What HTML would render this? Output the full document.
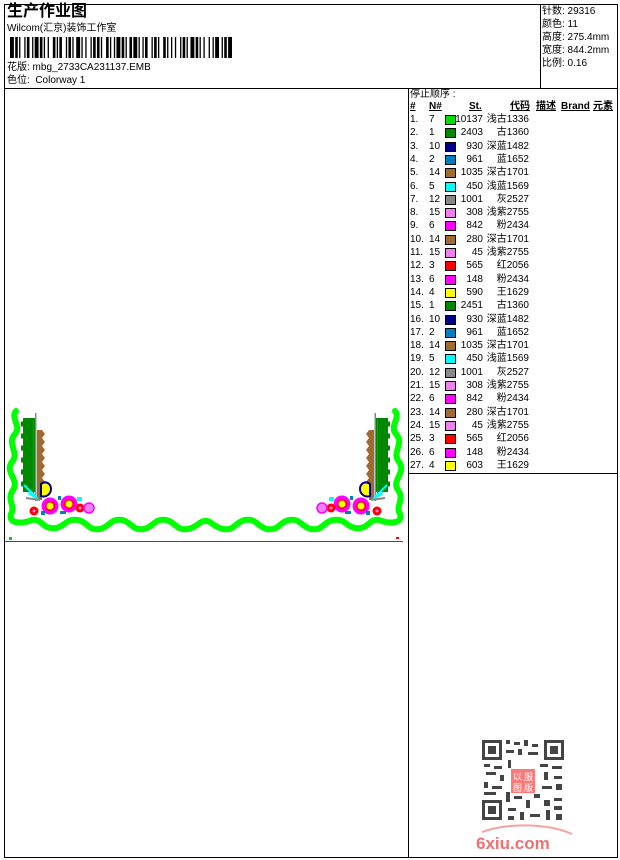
<!DOCTYPE html>
<html><head><meta charset="utf-8"><style>
*{margin:0;padding:0;box-sizing:border-box}
body{width:620px;height:860px;background:#fff;position:relative;font-family:"Liberation Sans","Noto Sans CJK SC",sans-serif;font-size:10px;color:#000;overflow:hidden}
.abs{position:absolute}
.l{position:absolute;background:#000}
.t{position:absolute;white-space:nowrap;line-height:12px}
.r{position:absolute;left:410px;height:13px;width:200px;font-size:10px;line-height:12px}
.r span{position:absolute;top:0}
.sw{position:absolute;top:1px;left:35px;width:11px;height:10px;border:1px solid #000}
</style></head><body>
<div class="l" style="left:4px;top:4px;width:614px;height:1px"></div>
<div class="l" style="left:4px;top:857px;width:614px;height:1px"></div>
<div class="l" style="left:4px;top:4px;width:1px;height:854px"></div>
<div class="l" style="left:617px;top:4px;width:1px;height:854px"></div>
<div class="l" style="left:4px;top:88px;width:614px;height:1px"></div>
<div class="l" style="left:540px;top:4px;width:1px;height:84px"></div>
<div class="l" style="left:408px;top:88px;width:1px;height:770px"></div>
<div class="l" style="left:408px;top:473px;width:210px;height:1px"></div>

<div class="t" style="left:7px;top:3px;font-size:16px;line-height:18px;font-weight:bold">生产作业图</div>
<div class="t" style="left:7px;top:23px">Wilcom(汇京)装饰工作室</div>
<svg class="abs" style="left:10px;top:37px" width="222" height="21" viewBox="0 0 222 21" preserveAspectRatio="none" id="bc"></svg>
<div class="t" style="left:7px;top:62px">花版: mbg_2733CA231137.EMB</div>
<div class="t" style="left:7px;top:75px">色位: &nbsp;Colorway 1</div>

<div class="t" style="left:542px;top:6px">针数: 29316</div>
<div class="t" style="left:542px;top:19px">颜色: 11</div>
<div class="t" style="left:542px;top:32px">高度: 275.4mm</div>
<div class="t" style="left:542px;top:45px">宽度: 844.2mm</div>
<div class="t" style="left:542px;top:58px">比例: 0.16</div>

<div class="t" style="left:410px;top:89px">停止顺序 :</div>
<div class="t" style="left:410px;top:101px;font-weight:bold;text-decoration:underline">#</div>
<div class="t" style="left:429px;top:101px;font-weight:bold;text-decoration:underline">N#</div>
<div class="t" style="left:469px;top:101px;font-weight:bold;text-decoration:underline">St.</div>
<div class="t" style="left:510px;top:101px;font-weight:bold;text-decoration:underline">代码</div>
<div class="t" style="left:536px;top:101px;font-weight:bold;text-decoration:underline">描述</div>
<div class="t" style="left:561px;top:101px;font-weight:bold;text-decoration:underline">Brand</div>
<div class="t" style="left:593px;top:101px;font-weight:bold;text-decoration:underline">元素</div>

<div id="rows"></div>

<div class="abs" style="left:5px;top:541px;width:398px;height:1px;background:#f00"></div>
<div class="abs" style="left:9px;top:537px;width:3px;height:3px;background:#0c0"></div>
<div class="abs" style="left:396px;top:537px;width:3px;height:2px;background:#f00"></div>

<svg class="abs" style="left:0;top:0" width="620" height="860">
<defs>
<g id="corner">
<path d="M16,411 C10,418 22,426 15,434 C6,444 20,452 12,462 C4,472 20,480 13,490 C6,500 16,506 11,514 C8,524 22,524 32,520 C42,518 42,530 56,528 C66,526 66,518 78,520 C88,522 88,531 100,529 C110,527 110,518 122,520 C132,522 132,531 144,529 C154,527 154,518 166,520 C176,522 176,531 188,529 C198,527 200,520 206,521" fill="none" stroke="#00ff00" stroke-width="6" stroke-linecap="round"/>
<path d="M23,418 h12 v74 h-12 z" fill="#008800"/>
<path d="M21,424 h3 M21,436 h3 M21,448 h3 M21,460 h3 M21,472 h3 M21,484 h3" stroke="#008800" stroke-width="5"/>
<path d="M37,430 h5 l3,4 -3,4 3,4 -3,4 3,4 -3,4 3,4 -3,4 3,4 -3,4 3,4 -3,4 3,4 -3,4 3,4 -3,4 v6 h-5 z" fill="#a06a30"/>
<rect x="35" y="413" width="1.5" height="88" fill="#888"/>
<rect x="33" y="420" width="1" height="75" fill="#0080c0"/>
<path d="M24,485 l14,14 M28,493 l10,6" stroke="#0ff" stroke-width="2"/>
<path d="M26,498 l14,2" stroke="#888" stroke-width="2"/>
<path d="M41,484 c5,-4 10,0 10,5 c0,5 -5,9 -10,7 z" fill="#ffff00" stroke="#000088" stroke-width="2"/>
<circle cx="50" cy="506" r="8.5" fill="#ff00ff"/><circle cx="50" cy="506" r="5" fill="#f00"/><circle cx="50" cy="506" r="3.5" fill="#ff0"/>
<circle cx="69" cy="504" r="8.5" fill="#ff00ff"/><circle cx="69" cy="504" r="5" fill="#f00"/><circle cx="69" cy="504" r="3.5" fill="#ff0"/>
<circle cx="34" cy="511" r="4.5" fill="#f00"/><circle cx="34" cy="511" r="1.5" fill="#ff80ff"/>
<circle cx="80" cy="508" r="4.5" fill="#f00"/><circle cx="80" cy="508" r="1.5" fill="#ff80ff"/>
<circle cx="89" cy="508" r="5" fill="#f080f0" stroke="#ff00ff" stroke-width="1.5"/>
<rect x="58" y="496" width="3" height="4" fill="#0080c0"/><rect x="60" y="511" width="6" height="3" fill="#0080c0"/>
<rect x="41" y="511" width="4" height="4" fill="#0080c0"/><rect x="77" y="497" width="5" height="4" fill="#0ff"/>
</g>
</defs>
<use href="#corner"/>
<use href="#corner" transform="translate(411,0) scale(-1,1)"/>

<g fill="#444">
<rect x="482" y="740" width="20" height="20"/><rect x="485" y="743" width="14" height="14" fill="#fff"/><rect x="488" y="746" width="8" height="8"/>
<rect x="544" y="740" width="20" height="20"/><rect x="547" y="743" width="14" height="14" fill="#fff"/><rect x="550" y="746" width="8" height="8"/>
<rect x="482" y="800" width="20" height="20"/><rect x="485" y="803" width="14" height="14" fill="#fff"/><rect x="488" y="806" width="8" height="8"/>
<path d="M506 740h4v4h-4zM514 742h6v3h-6zM524 740h4v6h-4zM532 744h6v3h-6zM506 750h8v3h-8zM518 749h4v6h-4zM528 752h10v3h-10zM484 764h6v3h-6zM494 766h8v3h-8zM508 760h3v8h-3zM540 764h8v3h-8zM552 766h10v3h-10zM486 772h10v3h-10zM500 775h4v6h-4zM544 772h4v8h-4zM554 776h8v3h-8zM484 782h4v6h-4zM492 786h10v3h-10zM542 786h10v3h-10zM556 784h6v6h-6zM484 792h12v3h-12zM506 792h4v10h-4zM514 796h8v3h-8zM526 800h4v8h-4zM534 794h6v4h-6zM544 800h6v6h-6zM554 798h8v3h-8zM508 808h8v3h-8zM520 812h4v8h-4zM530 814h10v3h-10zM546 810h4v10h-4zM554 806h8v4h-8zM556 814h6v6h-6zM508 816h6v4h-6z"/>
</g>
<rect x="511" y="769" width="24" height="24" fill="#f77"/>
<text x="513" y="780" font-size="9" fill="#fff" font-family="Noto Sans CJK SC">以 服</text>
<text x="513" y="791" font-size="9" fill="#fff" font-family="Noto Sans CJK SC">图 版</text>
<path d="M482,832 C510,822 550,824 572,834" stroke="#f9a0a0" stroke-width="2" fill="none"/>
<text x="476" y="849" font-size="17" font-weight="bold" fill="#f07070" font-family="Liberation Sans">6xiu.com</text>
</svg>

<script>
var c=[["7","#00e000","10137","浅古1336"],["1","#008800","2403","古1360"],["10","#000088","930","深蓝1482"],["2","#0080c0","961","蓝1652"],["14","#a06a30","1035","深古1701"],["5","#00ffff","450","浅蓝1569"],["12","#888888","1001","灰2527"],["15","#f080f0","308","浅紫2755"],["6","#ff00ff","842","粉2434"],["14","#a06a30","280","深古1701"],["15","#f080f0","45","浅紫2755"],["3","#ff0000","565","红2056"],["6","#ff00ff","148","粉2434"],["4","#ffff00","590","王1629"],
["1","#008800","2451","古1360"],["10","#000088","930","深蓝1482"],["2","#0080c0","961","蓝1652"],["14","#a06a30","1035","深古1701"],["5","#00ffff","450","浅蓝1569"],["12","#888888","1001","灰2527"],["15","#f080f0","308","浅紫2755"],["6","#ff00ff","842","粉2434"],["14","#a06a30","280","深古1701"],["15","#f080f0","45","浅紫2755"],["3","#ff0000","565","红2056"],["6","#ff00ff","148","粉2434"],["4","#ffff00","603","王1629"]];
var h="";
c.forEach(function(r,i){var y=114+i*13.3;
h+='<div class="r" style="top:'+y+'px"><span style="left:0">'+(i+1)+'.</span><span style="left:19px">'+r[0]+'</span><div class="sw" style="background:'+r[1]+'"></div><span style="right:127px">'+r[2]+'</span><span style="right:81px">'+r[3]+'</span></div>';});
document.getElementById("rows").innerHTML=h;
var w=[3,1,2,1,1,3,1,1,2,2,1,1,3,1,2,1,1,2,1,3,2,1,1,1,2,3,1,1,2,1,1,2,3,1,1,2,1,3,1,1,2,1,2,1,1,3,2,1,1,2,1,1,3,1,2,1,1,2,2,1,3,1,1,2,1,1,2,3,1,1,2,1,1,3,2,1,1,2,1,2,1,3,1,1,2,1,1,2,3,1,2,1,1,2,1,3,1,2,1,1,3,2,1,1,2,1,3];
var tot=0;w.forEach(function(v){tot+=v});
var x=0,s="",b=true;for(var i=0;i<w.length;i++){if(b)s+='<rect x="'+x+'" y="0" width="'+w[i]+'" height="21" fill="#000"/>';x+=w[i];b=!b;}
var bc=document.getElementById("bc");bc.setAttribute("viewBox","0 0 "+tot+" 21");bc.innerHTML=s;
</script>
</body></html>
